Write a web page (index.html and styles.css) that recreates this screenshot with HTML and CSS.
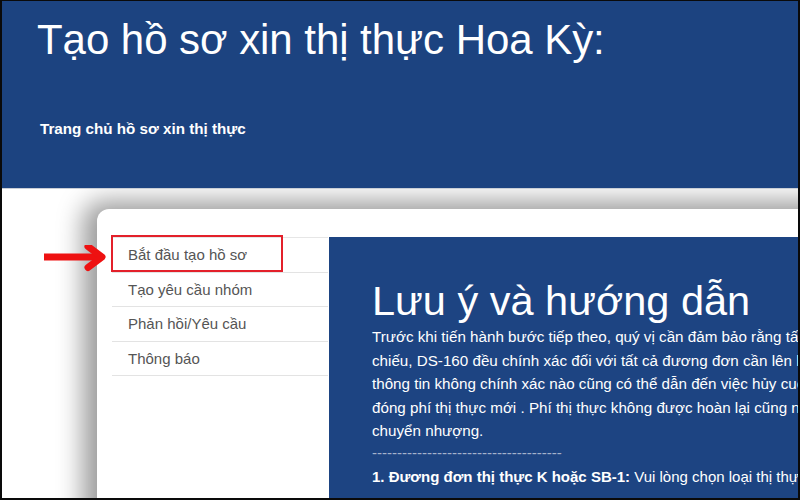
FILE: index.html
```html
<!DOCTYPE html>
<html lang="vi">
<head>
<meta charset="utf-8">
<title>Tạo hồ sơ xin thị thực Hoa Kỳ</title>
<link rel="stylesheet" href="styles.css">
</head>
<body>
<div class="frame">
  <header class="hero">
    <h1 class="hero-title">Tạo hồ sơ xin thị thực Hoa Kỳ:</h1>
    <p class="hero-sub">Trang chủ hồ sơ xin thị thực</p>
  </header>
  <main class="stage">
    <svg class="pointer" width="70" height="30" viewBox="0 0 70 30" aria-hidden="true">
      <path d="M7 12 H62" stroke="#ee1111" stroke-width="7" stroke-linecap="butt" fill="none"/>
      <path d="M51 1.5 L65 12 L51 22.5" stroke="#ee1111" stroke-width="7" stroke-linecap="round" stroke-linejoin="round" fill="none"/>
    </svg>
    <section class="card">
      <nav class="menu">
        <div class="menu-item first">Bắt đầu tạo hồ sơ<span class="highlight"></span></div>
        <div class="menu-item">Tạo yêu cầu nhóm</div>
        <div class="menu-item">Phản hồi/Yêu cầu</div>
        <div class="menu-item">Thông báo</div>
      </nav>
      <article class="panel">
        <h2 class="panel-title">Lưu ý và hướng dẫn</h2>
        <p class="panel-text">Trước khi tiến hành bước tiếp theo, quý vị cần đảm bảo rằng tất cả thông tin trong hộ<br>chiếu, DS-160 đều chính xác đối với tất cả đương đơn cần lên lịch hẹn. Bất kỳ<br>thông tin không chính xác nào cũng có thể dẫn đến việc hủy cuộc hẹn và phải<br>đóng phí thị thực mới . Phí thị thực không được hoàn lại cũng như không thể<br>chuyển nhượng.</p>
        <p class="panel-rule">--------------------------------------</p>
        <p class="panel-text step"><b>1. Đương đơn thị thực K hoặc SB-1:</b> Vui lòng chọn loại thị thực phù hợp</p>
      </article>
    </section>
  </main>
</div>
</body>
</html>
```
FILE: styles.css
```css
* { box-sizing: border-box; }
html, body { margin: 0; padding: 0; background: #fff; }
body { font-family: "Liberation Sans", Arial, sans-serif; }

.frame {
  width: 800px;
  height: 500px;
  overflow: hidden;
  border: 2px solid #0a0a0a;
  border-top-width: 1px;
  display: flex;
  flex-direction: column;
  position: relative;
}

.hero {
  flex: 0 0 188px;
  background: #1c4380;
  border-bottom: 1px solid #c9ced6;
  padding: 15px 0 0 35px;
  color: #fff;
  position: relative;
  z-index: 2;
}
.hero-title {
  margin: 0;
  font-weight: normal;
  font-size: 42px;
  line-height: 48px;
  letter-spacing: -0.05px;
}
.hero-sub {
  margin: 56px 0 0 3px;
  font-weight: bold;
  font-size: 15.2px;
  line-height: 17px;
  letter-spacing: 0;
}

.stage {
  flex: 1;
  position: relative;
  padding: 20px 0 0 95px;
  overflow: hidden;
}

.pointer {
  position: absolute;
  left: 35px;
  top: 56px;
  z-index: 3;
}

.card {
  background: #fff;
  border-radius: 12px 0 0 0;
  box-shadow: -6px 0 26px 8px rgba(0, 0, 0, 0.4);
  height: 400px;
  width: 760px;
  padding: 28px 0 0 15px;
  display: flex;
  align-items: flex-start;
}

.menu {
  width: 216px;
  flex: 0 0 216px;
  border-top: 1px solid #e6e6e6;
  margin-right: 1px;
}
.menu-item {
  height: 34.5px;
  line-height: 34px;
  padding-left: 16px;
  border-bottom: 1px solid #e3e3e3;
  color: #555;
  font-size: 15px;
  position: relative;
}
.highlight {
  position: absolute;
  left: -1px;
  top: -3px;
  width: 172px;
  height: 37px;
  border: 2px solid #e3202a;
}

.panel {
  flex: 1;
  background: #1d4482;
  height: 300px;
  padding: 40px 0 0 43px;
  color: #fff;
  white-space: nowrap;
  overflow: hidden;
}
.panel-title {
  margin: 0;
  font-weight: normal;
  font-size: 41.5px;
  line-height: 48px;
}
.panel-text {
  margin: 0;
  font-size: 15.2px;
  line-height: 23.6px;
}
.panel-text b { font-weight: bold; }
.panel-text.step { margin-top: 4px; font-size: 15px; }
.panel-rule {
  margin: 2px 0 0;
  font-size: 15px;
  line-height: 16px;
  color: rgba(255, 255, 255, 0.6);
}
```
